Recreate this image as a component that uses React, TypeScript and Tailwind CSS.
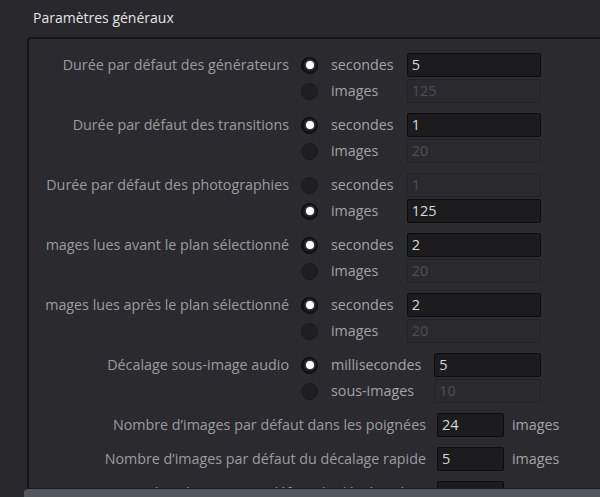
import React from 'react';

type Option = { label: string; value: string; checked: boolean };
type Group = { label: string; options: Option[] };

const GROUPS: Group[] = [
  {
    label: 'Durée par défaut des générateurs',
    options: [
      { label: 'secondes', value: '5', checked: true },
      { label: 'images', value: '125', checked: false },
    ],
  },
  {
    label: 'Durée par défaut des transitions',
    options: [
      { label: 'secondes', value: '1', checked: true },
      { label: 'images', value: '20', checked: false },
    ],
  },
  {
    label: 'Durée par défaut des photographies',
    options: [
      { label: 'secondes', value: '1', checked: false },
      { label: 'images', value: '125', checked: true },
    ],
  },
  {
    label: 'mages lues avant le plan sélectionné',
    options: [
      { label: 'secondes', value: '2', checked: true },
      { label: 'images', value: '20', checked: false },
    ],
  },
  {
    label: 'mages lues après le plan sélectionné',
    options: [
      { label: 'secondes', value: '2', checked: true },
      { label: 'images', value: '20', checked: false },
    ],
  },
  {
    label: 'Décalage sous-image audio',
    options: [
      { label: 'millisecondes', value: '5', checked: true },
      { label: 'sous-images', value: '10', checked: false },
    ],
  },
];

const SINGLES = [
  { label: 'Nombre d’images par défaut dans les poignées', value: '24' },
  { label: 'Nombre d’images par défaut du décalage rapide', value: '5' },
  { label: 'Nombre d’images par défaut du décalage lent', value: '1' },
];

function Radio({ checked }: { checked: boolean }) {
  return checked ? (
    <span className="flex h-[17px] w-[17px] items-center justify-center rounded-full border border-[#0b0b0c] bg-[#161618]">
      <span className="h-[8px] w-[8px] rounded-full bg-white shadow-[0_0_2px_1px_rgba(255,255,255,0.25)]" />
    </span>
  ) : (
    <span className="h-[17px] w-[17px] rounded-full border border-[#1a1a1c] bg-[#1f1f22]" />
  );
}

function Field({ value, enabled, className = '' }: { value: string; enabled: boolean; className?: string }) {
  return (
    <div
      className={
        'flex h-[24px] items-center rounded-[2px] border px-[4px] text-[14.5px] ' +
        (enabled
          ? 'border-[#0d0d0e] bg-[#1c1c1e] text-[#d8d8d8] '
          : 'border-[#232327] bg-[#29292e] text-[#4e4e53] ') +
        className
      }
    >
      {value}
    </div>
  );
}

export default function App() {
  return (
    <div
      className="relative h-[497px] w-full overflow-hidden bg-[#28282d]"
      style={{ fontFamily: '"Open Sans", "Noto Sans", sans-serif' }}
    >
      <div className="pl-[33px] pt-[8px] text-[14px] leading-[20px] text-[#e4e4e4]">Paramètres généraux</div>

      <div className="ml-[27px] mt-[9px] h-[600px] rounded-tl-[4px] border-l-2 border-t-2 border-[#161618] bg-[#2a2a2f] pt-[14px]">
        <div className="flex flex-col gap-[10px]">
          {GROUPS.map((g) => (
            <div key={g.label} className="flex items-start">
              <div className="w-[261px] shrink-0 whitespace-nowrap pr-[1px] text-right text-[14.3px] leading-[24px] text-[#9c9c9c]">
                {g.label}
              </div>
              <div className="ml-[11px] grid w-[240px] grid-cols-[17px_auto_1fr] items-center gap-x-[13px] gap-y-[2px]">
                {g.options.map((o) => (
                  <React.Fragment key={o.label}>
                    <Radio checked={o.checked} />
                    <span className="text-[14.3px] leading-[24px] text-[#a4a4a4]">{o.label}</span>
                    <Field value={o.value} enabled={o.checked} />
                  </React.Fragment>
                ))}
              </div>
            </div>
          ))}

          {SINGLES.map((s) => (
            <div key={s.label} className="flex items-center">
              <div className="w-[397px] shrink-0 whitespace-nowrap text-right text-[14.3px] leading-[24px] text-[#9c9c9c]">
                {s.label}
              </div>
              <Field value={s.value} enabled className="ml-[11px] w-[67px]" />
              <span className="ml-[8px] text-[14.3px] text-[#a4a4a4]">images</span>
            </div>
          ))}
        </div>
      </div>

      {/* horizontal bar at the bottom edge */}
      <div className="absolute bottom-0 left-[24px] right-0 h-[9px] rounded-tl-[4px] border-t border-[#1b1b1d] bg-[#53565c]" />
    </div>
  );
}
